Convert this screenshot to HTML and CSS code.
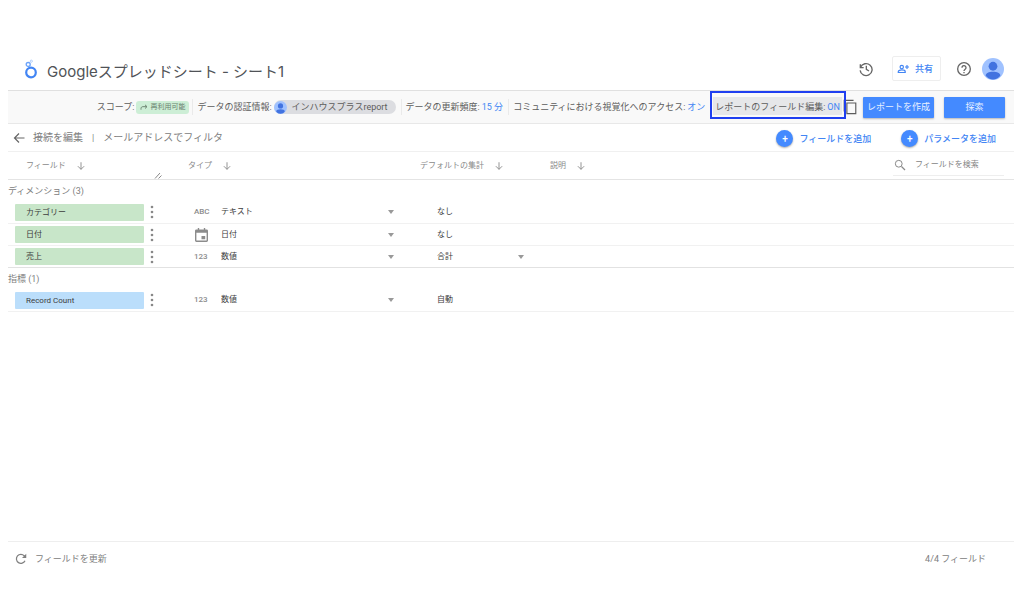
FILE: index.html
```html
<!DOCTYPE html>
<html lang="ja">
<head>
<meta charset="utf-8">
<meta name="viewport" content="width=device-width, initial-scale=1">
<title>Googleスプレッドシート - シート1</title>
<link rel="stylesheet" href="styles.css">
</head>
<body>
<svg class="defs" aria-hidden="true">
  <symbol id="avatar" viewBox="0 0 24 24"><circle cx="12" cy="12" r="12" fill="#a0c2ff"/><circle cx="12" cy="9" r="4.800" fill="#4273e0"/><path d="M4 19.400c0-3.200 3.600-4.400 8-4.400s8 1.200 8 4.400c-2 2.600-4.800 4.100-8 4.100s-6-1.500-8-4.100z" fill="#4273e0"/></symbol>
  <symbol id="arrow-down" viewBox="0 0 24 24"><path d="M12 3v17M4.500 12.500 12 20l7.500-7.500" fill="none" stroke="currentColor" stroke-width="2.200"/></symbol>
  <symbol id="dots" viewBox="0 0 6 16"><circle cx="3" cy="3" r="1.300"/><circle cx="3" cy="8" r="1.300"/><circle cx="3" cy="13" r="1.300"/></symbol>
</svg>
<div class="app">
  <header class="header">
    <svg class="logo" viewBox="0 0 14 20" aria-hidden="true"><circle cx="7" cy="13.500" r="4.800" fill="none" stroke="#4285f4" stroke-width="2.200"/><circle cx="4.200" cy="5.500" r="2" fill="none" stroke="#6ba3fa" stroke-width="1.300"/><circle cx="7.300" cy="2.200" r="1.100" fill="none" stroke="#a9cbfb" stroke-width=".9"/></svg>
    <h1 class="title">Googleスプレッドシート - シート1</h1>
    <button class="icon-button" aria-label="変更履歴"><svg class="icon-large" viewBox="0 0 24 24"><path d="M3.500 5v5h5M3.800 9.500A9 9 0 1 1 3.200 14M12.500 7v5.500l4 2.500" fill="none" stroke="currentColor" stroke-width="2"/></svg></button>
    <button class="share"><svg class="icon" viewBox="0 0 24 24"><g fill="none" stroke="currentColor" stroke-width="2.300"><circle cx="9.500" cy="8" r="3.400"/><path d="M2.500 19v-1.500c0-2.300 4-3.700 7-3.700s7 1.400 7 3.700V19zM20 4v8M16 8h8"/></g></svg>共有</button>
    <button class="icon-button" aria-label="ヘルプ"><svg class="icon-large" viewBox="0 0 24 24"><g fill="none" stroke="currentColor" stroke-width="2"><circle cx="12" cy="12" r="9.500"/><path d="M9 10a3 3 0 1 1 4.700 2.400c-1 .8-1.700 1.200-1.700 2.600"/></g><path fill="currentColor" d="M11 16.500h2v2h-2z"/></svg></button>
    <button class="icon-button" aria-label="アカウント"><svg class="account"><use href="#avatar"/></svg></button>
  </header>

  <div class="toolbar">
    <div class="item">スコープ:<span class="scope"><svg class="scope-icon" viewBox="0 0 24 18"><path d="M3 17v-3c0-4 2-6 6-6h11M15 2.500 21 8l-6 5.500" fill="none" stroke="currentColor" stroke-width="2.800"/></svg>再利用可能</span></div>
    <div class="item divided">データの認証情報:<span class="owner"><svg class="owner-icon"><use href="#avatar"/></svg>インハウスプラスreport</span></div>
    <div class="item divided">データの更新頻度:<a class="value" href="#">15 分</a></div>
    <div class="item divided">コミュニティにおける視覚化へのアクセス:<a class="value" href="#">オン</a></div>
    <div class="highlight"><span class="highlight-label">レポートのフィールド編集:<a class="value" href="#">ON</a></span></div>
    <button class="icon-button copy" aria-label="コピー"><svg class="icon-large" viewBox="0 0 16 18"><path d="M1.500 14V1.500H12M4.500 4.500h10v12h-10z" fill="none" stroke="currentColor" stroke-width="1.300"/></svg></button>
    <button class="primary">レポートを作成</button>
    <button class="primary explore">探索</button>
  </div>

  <nav class="actions">
    <a class="link back" href="#"><svg class="icon" viewBox="0 0 24 24"><path d="M23 12H3M12 3l-9 9 9 9" fill="none" stroke="#666" stroke-width="2.400"/></svg>接続を編集</a>
    <span class="bar">|</span>
    <a class="link" href="#">メールアドレスでフィルタ</a>
    <button class="add"><span class="plus">+</span>フィールドを追加</button>
    <button class="add"><span class="plus">+</span>パラメータを追加</button>
  </nav>

  <main class="content">
    <table class="fields">
      <colgroup><col class="col-field"><col class="col-type"><col class="col-total"><col></colgroup>
      <thead>
        <tr>
          <th class="head-field"><div class="head"><span>フィールド</span><svg class="sort"><use href="#arrow-down"/></svg><svg class="grip" viewBox="0 0 8 8"><path d="M1 7.500 6 2M4.500 7.500 7.500 4.500" stroke="#888" fill="none"/></svg></div></th>
          <th><div class="head"><span>タイプ</span><svg class="sort"><use href="#arrow-down"/></svg></div></th>
          <th><div class="head"><span>デフォルトの集計</span><svg class="sort"><use href="#arrow-down"/></svg></div></th>
          <th><div class="head"><span>説明</span><svg class="sort"><use href="#arrow-down"/></svg><label class="search"><svg class="icon" viewBox="0 0 24 24"><path d="m15 15 7 7" stroke="currentColor" stroke-width="2.600"/><circle cx="9.500" cy="9.500" r="6.800" fill="none" stroke="currentColor" stroke-width="2"/></svg><input class="search-input" type="text" placeholder="フィールドを検索" aria-label="フィールドを検索"></label></div></th>
        </tr>
      </thead>
      <tbody>
        <tr class="group"><th colspan="4">ディメンション (3)</th></tr>
        <tr>
          <td><div class="field"><span class="chip">カテゴリー</span><button class="icon-button" aria-label="メニュー"><svg class="dots"><use href="#dots"/></svg></button></div></td>
          <td><div class="type"><span class="glyph">ABC</span><span class="picker"><select class="select" aria-label="タイプ"><option>テキスト</option></select></span></div></td>
          <td><div class="total">なし</div></td><td></td>
        </tr>
        <tr>
          <td><div class="field"><span class="chip">日付</span><button class="icon-button" aria-label="メニュー"><svg class="dots"><use href="#dots"/></svg></button></div></td>
          <td><div class="type"><span class="glyph"><svg class="calendar" viewBox="0 0 14 15"><path fill="currentColor" fill-rule="evenodd" d="M3 0h1.500v1.500h5V0H11v1.500h1.500A1.500 1.500 0 0 1 14 3v10.500a1.500 1.500 0 0 1-1.500 1.500h-11A1.500 1.500 0 0 1 0 13.500V3a1.500 1.500 0 0 1 1.500-1.500H3zM1.500 5v8.500h11V5zM7 8.500h4V12H7z"/></svg></span><span class="picker"><select class="select" aria-label="タイプ"><option>日付</option></select></span></div></td>
          <td><div class="total">なし</div></td><td></td>
        </tr>
        <tr class="last">
          <td><div class="field"><span class="chip">売上</span><button class="icon-button" aria-label="メニュー"><svg class="dots"><use href="#dots"/></svg></button></div></td>
          <td><div class="type"><span class="glyph">123</span><span class="picker"><select class="select" aria-label="タイプ"><option>数値</option></select></span></div></td>
          <td><div class="total"><span class="picker"><select class="select" aria-label="集計"><option>合計</option></select></span></div></td><td></td>
        </tr>
        <tr class="group"><th colspan="4">指標 (1)</th></tr>
        <tr>
          <td><div class="field"><span class="chip metric">Record Count</span><button class="icon-button" aria-label="メニュー"><svg class="dots"><use href="#dots"/></svg></button></div></td>
          <td><div class="type"><span class="glyph">123</span><span class="picker"><select class="select" aria-label="タイプ"><option>数値</option></select></span></div></td>
          <td><div class="total">自動</div></td><td></td>
        </tr>
      </tbody>
    </table>
  </main>

  <footer class="footer">
    <button class="refresh"><svg class="icon" viewBox="0 0 24 24"><path d="M20 15.500A9 9 0 1 1 18.500 5.600L21 8" fill="none" stroke="currentColor" stroke-width="2.500"/><path d="M22.500 1.500V10H14z" fill="currentColor"/></svg>フィールドを更新</button>
    <span>4/4 フィールド</span>
  </footer>
</div>
</body>
</html>
```

FILE: styles.css
```css
* { box-sizing: border-box; }

body {
  margin: 0;
  background: #fff;
  color: #666;
  font: 9px/12px Roboto, "Noto Sans CJK JP", sans-serif;
}

button, input, select { font: inherit; color: inherit; }
button { border: 0; padding: 0; background: none; cursor: pointer; }
a { color: inherit; text-decoration: none; }
svg { display: block; flex: none; }

.defs { position: absolute; width: 0; height: 0; }
.icon { width: 12px; height: 12px; }
.icon-large { width: 16px; height: 16px; }
.icon-button { display: flex; flex: none; }

.app {
  display: flex;
  flex-direction: column;
  min-height: 100vh;
  padding: 46px 10px 38px 8px;
}

.header {
  display: flex;
  align-items: center;
  height: 45px;
  padding: 1px 10px 0 16px;
  border-bottom: 1px solid #e0e0e0;
}
.logo { width: 14px; height: 20px; margin-right: 9px; }
.title {
  flex: 1;
  margin: 6px 0 0;
  color: #505357;
  font: 400 15px/20px Inter, "Noto Sans CJK JP", sans-serif;
}
.share {
  display: flex;
  align-items: center;
  gap: 6px;
  height: 25px;
  margin: 0 15px 0 18px;
  padding: 0 7px 0 4px;
  border: 1px solid #eee;
  border-radius: 2px;
  color: #4285f4;
  font-weight: 500;
}
.account { width: 22px; height: 22px; margin-left: 10px; }

.toolbar {
  display: flex;
  align-items: center;
  justify-content: flex-end;
  height: 33px;
  padding-right: 9px;
  border-bottom: 1px solid #e8e8e8;
  background: #f9f9f9;
  color: #5c5c5c;
  white-space: nowrap;
}
.item { display: flex; align-items: center; gap: 2px; margin-right: 5px; }
.divided { padding-left: 4px; border-left: 1px solid #eaeaea; line-height: 16px; }
.item:first-child { margin-right: 3px; }
.value { color: #4285f4; }
.scope {
  display: flex;
  align-items: center;
  gap: 2px;
  height: 13px;
  padding: 0 4px;
  border-radius: 3px;
  background: #cdeed6;
  color: #69806e;
  font-size: 7px;
}
.scope-icon { width: 8px; height: 6px; }
.owner {
  display: flex;
  align-items: center;
  gap: 5px;
  height: 14px;
  padding-right: 8px;
  border-radius: 7px;
  background: #dcdde1;
}
.owner-icon { width: 13px; height: 13px; }
.highlight {
  display: flex;
  align-self: flex-start;
  z-index: 1;
  height: 28px;
  margin-right: -4px;
  padding: 4px 2px 2px 1px;
  border: 2px solid #1f3ff0;
}
.highlight-label {
  display: flex;
  align-items: center;
  gap: 2px;
  padding: 2px 2px 0;
  background: #e6e7e9;
}
.copy { margin-right: 5px; }
.primary {
  height: 21px;
  padding: 0 4px;
  border-radius: 1px;
  background: #448aff;
  box-shadow: 0 1px 2px #0004;
  color: #e8f1ff;
}
.explore { min-width: 61px; margin-left: 10px; }

.actions {
  display: flex;
  align-items: center;
  height: 28px;
  padding: 0 18px 0 5px;
  border-bottom: 1px solid #f0f0f0;
  color: #808080;
  white-space: nowrap;
}
.link { font-size: 10px; }
.back { display: flex; align-items: center; gap: 8px; }
.bar { margin: 0 9px; }
.add {
  display: flex;
  align-items: center;
  gap: 6px;
  margin-left: 30px;
  padding-top: 2px;
  color: #4285f4;
  font-size: 9px;
  font-weight: 500;
}
.add:first-of-type { margin-left: auto; }
.plus {
  width: 17px;
  border-radius: 9px;
  background: #448aff;
  box-shadow: 0 1px 2px #0005;
  color: #fff;
  font-size: 10px;
  line-height: 17px;
  text-align: center;
}

.content { flex: 1; }
.fields {
  width: 100%;
  border-collapse: collapse;
  table-layout: fixed;
  color: #3c3c3c;
  font-size: 8px;
}
.fields th, .fields td { height: 22px; padding: 0; border-bottom: 1px solid #f1f1f1; text-align: left; }
.fields thead th { height: 27px; border-color: #e4e4e4; color: #8a8a8a; font-weight: 400; }
.fields .last td { border-color: #e2e2e2; }
.fields .group th { border: 0; color: #808080; font-size: 9px; font-weight: 400; }
.fields .head-field { padding-left: 18px; }
.col-field { width: 180px; }
.col-type { width: 232px; }
.col-total { width: 130px; }
.head { display: flex; align-items: center; gap: 10px; height: 27px; }
.sort { width: 10px; height: 10px; }
.grip { align-self: flex-end; width: 8px; height: 8px; margin: 0 26px 0 auto; }
.search {
  display: flex;
  align-items: center;
  gap: 9px;
  width: 111px;
  height: 20px;
  margin: 0 10px 0 auto;
  padding-left: 1px;
  border-bottom: 1px solid #eee;
}
.search-input { flex: 1; min-width: 0; padding: 0; border: 0; outline: 0; background: none; }
.search-input::placeholder { color: #858585; }
.field { display: flex; align-items: center; gap: 5px; padding-left: 7px; }
.chip { width: 129px; padding-left: 11px; border-radius: 1px; background: #c8e6c9; line-height: 17px; }
.metric { background: #bbdefb; }
.dots { width: 6px; height: 16px; fill: #888; }
.type { display: flex; align-items: center; padding: 0 26px 0 6px; }
.glyph { width: 27px; color: #8c8c8c; font-weight: 500; }
.calendar { width: 13px; height: 14px; margin-left: 1px; }
.total { padding: 0 26px 0 17px; }
.picker { display: flex; flex: 1; align-items: center; }
.picker::after {
  width: 0;
  margin-left: -7px;
  border: 3px solid transparent;
  border-top: 4px solid #999;
  border-bottom: 0;
  content: "";
  pointer-events: none;
}
.select { flex: 1; min-width: 0; padding: 0; border: 0; background: none; appearance: none; }

.footer {
  display: flex;
  align-items: center;
  justify-content: space-between;
  height: 35px;
  padding: 0 28px 0 7px;
  border-top: 1px solid #eee;
  color: #808080;
}
.refresh { display: flex; align-items: center; gap: 8px; font-size: 9px; }
```
